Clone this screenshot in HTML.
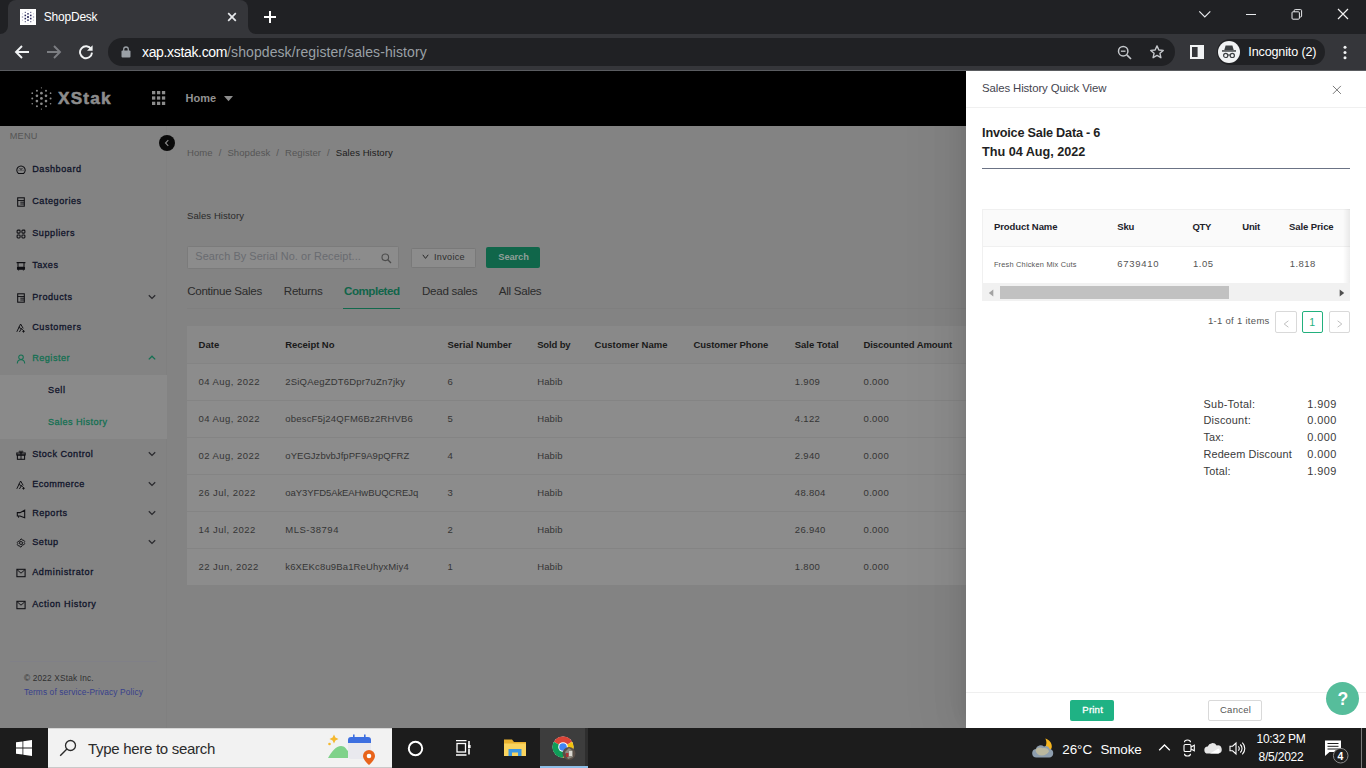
<!DOCTYPE html>
<html><head><meta charset="utf-8"><title>ShopDesk</title>
<style>
*{box-sizing:border-box;margin:0;padding:0}
html,body{width:1366px;height:768px;overflow:hidden;background:#838383;font-family:"Liberation Sans",sans-serif;}
.abs{position:absolute}
#root{position:relative;width:1366px;height:768px;overflow:hidden}
.t{white-space:nowrap}
/* chrome */
#tabstrip{left:0;top:0;width:1366px;height:34px;background:#202124}
#tab{left:8px;top:0;width:240px;height:34px;background:#35363a;border-radius:8px 8px 0 0}
#toolbar{left:0;top:34px;width:1366px;height:36px;background:#35363a}
#tbline{left:0;top:70px;width:1366px;height:1px;background:#5a5c60}
#omni{left:108px;top:38px;width:1067px;height:28px;border-radius:14px;background:#202124}
.ct{color:#fff;font-size:14px;white-space:nowrap}
/* app */
#apphead{left:0;top:71px;width:966px;height:55px;background:#000}
#page{left:0;top:126px;width:966px;height:602px;background:#838383}
#sidebar{left:0;top:126px;width:167px;height:602px;background:#838383;border-right:1px solid #808080}
.mi{position:absolute;left:32px;font-size:10px;font-weight:bold;color:#1d1d1f;white-space:nowrap;letter-spacing:.1px}
.mi.g{color:#176b51}
.ic{position:absolute;left:17px;width:10px;height:10px}
.chev{position:absolute;left:148px;width:8px;height:6px}
#submenu{left:0;top:375px;width:166.5px;height:64px;background:#8a8a8a}
/* main */
.bc{font-size:9.5px;color:#5f5f5f;white-space:nowrap}
.tabt{font-size:12px;color:#2c2c2c;white-space:nowrap}
#tbl{left:187px;top:326px;width:779px;height:259px;background:#8a8a8a}
#thead{left:187px;top:326px;width:779px;height:37px;background:#868686}
.th{position:absolute;font-size:9.5px;font-weight:bold;color:#1c1c1c;white-space:nowrap;top:339px}
.td{position:absolute;font-size:9.5px;color:#333;white-space:nowrap;letter-spacing:.3px}
.rl{position:absolute;left:187px;width:779px;height:1px;background:#818181}
/* drawer */
#drawer{left:966px;top:71px;width:400px;height:657px;background:#fff}
#shadow{left:950px;top:71px;width:16px;height:657px;background:linear-gradient(to right,rgba(0,0,0,0),rgba(0,0,0,.12))}
.dt{position:absolute;white-space:nowrap}

.dth{top:221px;font-size:9.5px;font-weight:bold;color:#262626;letter-spacing:.1px}
.dtd{top:258px;font-size:9.5px;color:#444;letter-spacing:.55px}
.pg{top:311px;width:21px;height:22px;border:1px solid #d9d9d9;border-radius:2px;background:#fff}
.tl{left:1203px;font-size:11px;color:#3c3c3c;letter-spacing:.05px}
.tv{right:29px;font-size:11px;color:#3c3c3c;letter-spacing:.3px}
/* taskbar */
.tk{color:#fff;white-space:nowrap}
#taskbar{left:0;top:728px;width:1366px;height:40px;background:#1c1c1c}
</style></head><body><div id="root">

<!-- ===== Browser chrome ===== -->
<div id="tabstrip" class="abs"></div>
<div id="tab" class="abs"></div>
<svg class="abs" style="left:0;top:26px" width="8" height="8" viewBox="0 0 8 8"><path d="M8 0v8H0A8 8 0 0 0 8 0z" fill="#35363a"/></svg>
<svg class="abs" style="left:248px;top:26px" width="8" height="8" viewBox="0 0 8 8"><path d="M0 0v8h8A8 8 0 0 1 0 0z" fill="#35363a"/></svg>
<svg class="abs" style="left:20px;top:9px" width="16" height="16" viewBox="0 0 16 16"><rect width="16" height="16" fill="#fff"/><g fill="#2a2a5c"><rect x="7.64" y="1.27" width="0.72" height="0.72" opacity="0.30"/><rect x="7.22" y="4.04" width="1.56" height="1.56" opacity="0.90"/><rect x="7.10" y="7.10" width="1.80" height="1.80" opacity="1.00"/><rect x="7.22" y="10.40" width="1.56" height="1.56" opacity="0.90"/><rect x="7.64" y="14.02" width="0.72" height="0.72" opacity="0.30"/><rect x="4.76" y="2.83" width="1.08" height="1.08" opacity="0.85"/><rect x="4.52" y="5.64" width="1.56" height="1.56" opacity="1.00"/><rect x="4.52" y="8.79" width="1.56" height="1.56" opacity="1.00"/><rect x="4.76" y="12.14" width="1.08" height="1.08" opacity="0.85"/><rect x="10.21" y="2.83" width="1.08" height="1.08" opacity="0.85"/><rect x="9.97" y="5.64" width="1.56" height="1.56" opacity="1.00"/><rect x="9.97" y="8.79" width="1.56" height="1.56" opacity="1.00"/><rect x="10.21" y="12.14" width="1.08" height="1.08" opacity="0.85"/><rect x="1.96" y="4.28" width="1.08" height="1.08" opacity="0.30"/><rect x="1.84" y="7.34" width="1.32" height="1.32" opacity="0.50"/><rect x="1.96" y="10.64" width="1.08" height="1.08" opacity="0.30"/><rect x="12.96" y="4.28" width="1.08" height="1.08" opacity="0.30"/><rect x="12.84" y="7.34" width="1.32" height="1.32" opacity="0.50"/><rect x="12.96" y="10.64" width="1.08" height="1.08" opacity="0.30"/></g></svg>
<div class="abs ct" style="left:43.8px;top:10px;font-size:12px;letter-spacing:-.22px">ShopDesk</div>
<svg class="abs" style="left:227px;top:12px" width="10" height="10" viewBox="0 0 10 10"><path d="M1.2 1.2l7.6 7.6M8.8 1.2L1.2 8.8" stroke="#e8eaed" stroke-width="1.7"/></svg>
<svg class="abs" style="left:263px;top:10px" width="14" height="14" viewBox="0 0 14 14"><path d="M7 1v12M1 7h12" stroke="#fff" stroke-width="2"/></svg>
<!-- window controls -->
<svg class="abs" style="left:1198px;top:9px" width="14" height="10" viewBox="0 0 14 10"><path d="M1.3 2.3L6.8 7.8l5.5-5.5" stroke="#e8eaed" stroke-width="1.2" fill="none"/></svg>
<div class="abs" style="left:1246px;top:14px;width:10px;height:1px;background:#e8eaed"></div>
<svg class="abs" style="left:1291px;top:9px" width="12" height="11" viewBox="0 0 12 11"><rect x="1" y="2.8" width="7.4" height="7.4" rx="1" stroke="#e8eaed" stroke-width="1" fill="none"/><path d="M3.2 2.8V1.6a1 1 0 0 1 1-1h5.4a1 1 0 0 1 1 1v5.4a1 1 0 0 1-1 1H8.6" stroke="#e8eaed" stroke-width="1" fill="none"/></svg>
<svg class="abs" style="left:1337px;top:8px" width="12" height="12" viewBox="0 0 12 12"><path d="M1 1l10 10M11 1L1 11" stroke="#f1f1f1" stroke-width="1.2"/></svg>

<div id="toolbar" class="abs"></div>
<div id="tbline" class="abs"></div>
<!-- nav icons -->
<svg class="abs" style="left:14px;top:44px" width="16" height="16" viewBox="0 0 16 16"><path d="M15 8H2.5M8 2L2 8l6 6" stroke="#f1f3f4" stroke-width="1.9" fill="none"/></svg>
<svg class="abs" style="left:46px;top:44px" width="16" height="16" viewBox="0 0 16 16"><path d="M1 8h12.5M8 2l6 6-6 6" stroke="#7c7e82" stroke-width="1.9" fill="none"/></svg>
<svg class="abs" style="left:78px;top:44px" width="16" height="16" viewBox="0 0 16 16"><path d="M13.2 5.2A6 6 0 1 0 14 8.6" stroke="#f1f3f4" stroke-width="1.9" fill="none"/><path d="M14.6 1.2v5.6H9z" fill="#f1f3f4"/></svg>
<div id="omni" class="abs"></div>
<svg class="abs" style="left:121px;top:46px" width="10" height="12" viewBox="0 0 10 12"><rect x="0.5" y="4.6" width="9" height="7" rx="1" fill="#9aa0a6"/><path d="M2.7 5V3.3a2.3 2.3 0 0 1 4.6 0V5" stroke="#9aa0a6" stroke-width="1.3" fill="none"/></svg>
<div class="abs ct" style="left:142px;top:43.5px;font-size:14px"><span style="color:#fff;letter-spacing:-.34px">xap.xstak.com</span><span style="color:#9aa0a6;letter-spacing:.09px">/shopdesk/register/sales-history</span></div>
<svg class="abs" style="left:1117px;top:45px" width="16" height="15" viewBox="0 0 16 15"><circle cx="6.2" cy="6.2" r="4.7" stroke="#c4c7cb" stroke-width="1.5" fill="none"/><path d="M9.8 9.8l4.2 4.2" stroke="#c4c7cb" stroke-width="1.7"/><path d="M3.9 6.2h4.6" stroke="#c4c7cb" stroke-width="1.3"/></svg>
<svg class="abs" style="left:1149px;top:44px" width="16" height="16" viewBox="0 0 16 16"><path d="M8 1.9l1.85 4.05 4.4.45-3.3 2.95.95 4.35L8 11.45 4.1 13.7l.95-4.35-3.3-2.95 4.4-.45z" stroke="#c4c7cb" stroke-width="1.4" fill="none" stroke-linejoin="round"/></svg>
<svg class="abs" style="left:1190px;top:45px" width="14" height="14" viewBox="0 0 14 14"><rect x="1" y="1" width="12" height="12" stroke="#f1f3f4" stroke-width="2" fill="none"/><rect x="7.6" y="1" width="5.4" height="12" fill="#f1f3f4"/></svg>
<div class="abs" style="left:1217px;top:39px;width:108px;height:26px;border-radius:13px;background:#202124"></div>
<div class="abs" style="left:1218px;top:41px;width:22px;height:22px;border-radius:11px;background:#f1f3f4"></div>
<svg class="abs" style="left:1221px;top:45px" width="16" height="14" viewBox="0 0 16 14"><path d="M4.6 0.6h6.8l1.3 4.3H3.3z" fill="#3c4043"/><rect x="1" y="5.2" width="14" height="1.5" fill="#3c4043"/><circle cx="4.7" cy="10.4" r="2.1" stroke="#3c4043" stroke-width="1.2" fill="none"/><circle cx="11.3" cy="10.4" r="2.1" stroke="#3c4043" stroke-width="1.2" fill="none"/><path d="M6.8 10h2.4" stroke="#3c4043" stroke-width="1.1"/></svg>
<div class="abs ct" style="left:1248.3px;top:45px;font-size:12.6px;letter-spacing:-.15px">Incognito (2)</div>
<svg class="abs" style="left:1342px;top:45px" width="6" height="15" viewBox="0 0 6 15" fill="#f1f3f4"><circle cx="3" cy="2.3" r="1.5"/><circle cx="3" cy="7.5" r="1.5"/><circle cx="3" cy="12.7" r="1.5"/></svg>

<!-- ===== App ===== -->
<div id="page" class="abs"></div>
<div id="sidebar" class="abs"></div>
<div id="apphead" class="abs"></div>
<div id="submenu" class="abs"></div>


<!-- app header content -->
<svg class="abs" style="left:26px;top:82px" width="32" height="32" viewBox="0 0 32 32" fill="#8c8c8c"><circle cx="15.42" cy="5.83" r="0.62"/><circle cx="15.42" cy="11.17" r="1.35"/><circle cx="15.42" cy="16.46" r="1.40"/><circle cx="15.42" cy="21.75" r="1.35"/><circle cx="15.42" cy="27.08" r="0.62"/><circle cx="10.92" cy="8.75" r="1.00"/><circle cx="10.92" cy="13.83" r="1.30"/><circle cx="10.92" cy="19.08" r="1.30"/><circle cx="10.92" cy="24.25" r="1.00"/><circle cx="20.00" cy="8.75" r="1.00"/><circle cx="20.00" cy="13.83" r="1.30"/><circle cx="20.00" cy="19.08" r="1.30"/><circle cx="20.00" cy="24.25" r="1.00"/><circle cx="6.25" cy="11.17" r="0.85"/><circle cx="6.25" cy="16.46" r="1.00"/><circle cx="6.25" cy="21.75" r="0.80"/><circle cx="24.58" cy="11.17" r="0.85"/><circle cx="24.58" cy="16.46" r="1.00"/><circle cx="24.58" cy="21.75" r="0.80"/></svg>
<div class="abs t " style="left:58.10px;top:90.04px;font-size:17.2px;line-height:17.2px;font-weight:bold;color:#8c8c8c;letter-spacing:1.15px;-webkit-text-stroke:.55px #8c8c8c">XStak</div>
<svg class="abs" style="left:151.8px;top:91px" width="14" height="15" viewBox="0 0 14 15" fill="#8c8c8c"><rect x="0.00" y="0.00" width="3.3" height="3.3"/><rect x="0.00" y="5.35" width="3.3" height="3.3"/><rect x="0.00" y="10.70" width="3.3" height="3.3"/><rect x="4.95" y="0.00" width="3.3" height="3.3"/><rect x="4.95" y="5.35" width="3.3" height="3.3"/><rect x="4.95" y="10.70" width="3.3" height="3.3"/><rect x="9.90" y="0.00" width="3.3" height="3.3"/><rect x="9.90" y="5.35" width="3.3" height="3.3"/><rect x="9.90" y="10.70" width="3.3" height="3.3"/></svg>
<div class="abs t " style="left:185.50px;top:92.79px;font-size:11px;line-height:11px;font-weight:bold;color:#929292;letter-spacing:.0px">Home</div>
<svg class="abs" style="left:224px;top:96px" width="9" height="6" viewBox="0 0 9 6"><path d="M0 0h9L4.500 5.300z" fill="#8c8c8c"/></svg>
<!-- sidebar content -->
<div class="abs t " style="left:9.70px;top:131.81px;font-size:9.2px;line-height:9.2px;color:#555;letter-spacing:.25px">MENU</div>
<div class="abs" style="left:158.7px;top:134.900px;width:16.500px;height:16.500px;border-radius:9px;background:#0a0a0a"></div>
<svg class="abs" style="left:163px;top:139px" width="8" height="8" viewBox="0 0 8 8"><path d="M5.300 1.200L2.500 4l2.800 2.800" stroke="#8c8c8c" stroke-width="1.100" fill="none"/></svg>
<div class="abs t " style="left:32.20px;top:165.20px;font-size:9.1px;line-height:9.1px;color:#10142a;letter-spacing:0.55px;-webkit-text-stroke:.3px #10142a">Dashboard</div>
<svg class="abs" style="left:15.500px;top:165.00px" width="10" height="10" viewBox="0 0 10 10" fill="none" stroke="#0e0e12" stroke-width="1.050"><path d="M2.450 8.500A4.200 4.200 0 1 1 7.550 8.500z"/><path d="M5 5.600V3.200" stroke-width="1"/><path d="M2.500 5.300h.9M6.600 5.300h.9M3.100 3.100l.6.600M6.900 3.100l-.6.600" stroke-width=".7"/></svg>
<div class="abs t " style="left:32.20px;top:197.20px;font-size:9.1px;line-height:9.1px;color:#10142a;letter-spacing:0.55px;-webkit-text-stroke:.3px #10142a">Categories</div>
<svg class="abs" style="left:15.500px;top:197.00px" width="10" height="10" viewBox="0 0 10 10" fill="none" stroke="#0e0e12" stroke-width="1.050"><rect x="1.700" y="0.800" width="6.600" height="8.400"/><path d="M1.700 3.500h6.600M4.300 5.200h4M4.300 7h4" stroke-width=".9"/></svg>
<div class="abs t " style="left:32.20px;top:229.20px;font-size:9.1px;line-height:9.1px;color:#10142a;letter-spacing:0.55px;-webkit-text-stroke:.3px #10142a">Suppliers</div>
<svg class="abs" style="left:15.500px;top:229.00px" width="10" height="10" viewBox="0 0 10 10" fill="none" stroke="#0e0e12" stroke-width="1.050"><rect x="1.100" y="1.100" width="3" height="3" rx=".8"/><rect x="5.900" y="1.100" width="3" height="3" rx=".8"/><rect x="1.100" y="5.900" width="3" height="3" rx=".8"/><rect x="5.900" y="5.900" width="3" height="3" rx=".8"/></svg>
<div class="abs t " style="left:32.20px;top:261.20px;font-size:9.1px;line-height:9.1px;color:#10142a;letter-spacing:0.5px;-webkit-text-stroke:.3px #10142a">Taxes</div>
<svg class="abs" style="left:15.500px;top:261.00px" width="10" height="10" viewBox="0 0 10 10" fill="none" stroke="#0e0e12" stroke-width="1.050"><path d="M0.600 1.600h8.800M2 1.600v4.600h6V1.600"/><path d="M1.500 6.500h7v1.600h-7z" fill="#0e0e12"/><path d="M2.600 8.300v1.200M7.400 8.300v1.200" stroke-width=".9"/></svg>
<div class="abs t " style="left:32.20px;top:293.20px;font-size:9.1px;line-height:9.1px;color:#10142a;letter-spacing:0.55px;-webkit-text-stroke:.3px #10142a">Products</div>
<svg class="abs" style="left:15.500px;top:293.00px" width="10" height="10" viewBox="0 0 10 10" fill="none" stroke="#0e0e12" stroke-width="1.050"><rect x="1.700" y="0.800" width="6.600" height="8.400"/><path d="M1.700 3.500h6.600M4.300 5.200h4M4.300 7h4" stroke-width=".9"/></svg>
<svg class="abs" style="left:147.800px;top:294.10px" width="8" height="6" viewBox="0 0 8 6"><path d="M.8 1.200L4 4.400l3.200-3.200" stroke="#2a2a2e" stroke-width="1.250" fill="none"/></svg>
<div class="abs t " style="left:32.20px;top:323.20px;font-size:9.1px;line-height:9.1px;color:#10142a;letter-spacing:0.6px;-webkit-text-stroke:.3px #10142a">Customers</div>
<svg class="abs" style="left:15.500px;top:323.00px" width="10" height="10" viewBox="0 0 10 10" fill="none" stroke="#0e0e12" stroke-width="1.050"><path d="M0.800 8.800L4.600 1l2.600 4.400M2.600 4.200l4.200 2.400M3.400 9l2.200-3.600" stroke-width=".95"/><path d="M7.500 7v2.600M6.200 8.300h2.600" stroke-width=".9"/></svg>
<div class="abs t " style="left:32.20px;top:354.20px;font-size:9.1px;line-height:9.1px;color:#147052;letter-spacing:0.5px;-webkit-text-stroke:.3px #147052">Register</div>
<svg class="abs" style="left:15.500px;top:354.00px" width="10" height="10" viewBox="0 0 10 10" fill="none" stroke="#147052" stroke-width="1.050"><circle cx="5" cy="3.200" r="2.300"/><path d="M1.300 9.600c0-2.600 1.500-3.900 3.700-3.900s3.700 1.300 3.700 3.900"/></svg>
<svg class="abs" style="left:147.800px;top:355.10px" width="8" height="6" viewBox="0 0 8 6"><path d="M.8 4.400L4 1.200l3.200 3.200" stroke="#147052" stroke-width="1.250" fill="none"/></svg>
<div class="abs t " style="left:32.20px;top:450.20px;font-size:9.1px;line-height:9.1px;color:#10142a;letter-spacing:0.5px;-webkit-text-stroke:.3px #10142a">Stock Control</div>
<svg class="abs" style="left:15.500px;top:450.00px" width="10" height="10" viewBox="0 0 10 10" fill="none" stroke="#0e0e12" stroke-width="1.050"><rect x="1.400" y="5" width="7.200" height="4.300"/><rect x="0.800" y="3" width="8.400" height="2"/><path d="M5 3v6.300M5 3C3.800 3 2.600 1.600 3.600 1s1.400 1 1.400 2zM5 3c1.200 0 2.400-1.400 1.400-2S5 2 5 3z" stroke-width=".9"/></svg>
<svg class="abs" style="left:147.800px;top:451.10px" width="8" height="6" viewBox="0 0 8 6"><path d="M.8 1.200L4 4.400l3.200-3.200" stroke="#2a2a2e" stroke-width="1.250" fill="none"/></svg>
<div class="abs t " style="left:32.20px;top:480.20px;font-size:9.1px;line-height:9.1px;color:#10142a;letter-spacing:0.45px;-webkit-text-stroke:.3px #10142a">Ecommerce</div>
<svg class="abs" style="left:15.500px;top:480.00px" width="10" height="10" viewBox="0 0 10 10" fill="none" stroke="#0e0e12" stroke-width="1.050"><path d="M0.800 8.800L4.600 1l2.600 4.400M2.600 4.200l4.200 2.400M3.400 9l2.200-3.600" stroke-width=".95"/><path d="M7.500 7v2.600M6.200 8.300h2.600" stroke-width=".9"/></svg>
<svg class="abs" style="left:147.800px;top:481.10px" width="8" height="6" viewBox="0 0 8 6"><path d="M.8 1.200L4 4.400l3.200-3.200" stroke="#2a2a2e" stroke-width="1.250" fill="none"/></svg>
<div class="abs t " style="left:32.20px;top:509.20px;font-size:9.1px;line-height:9.1px;color:#10142a;letter-spacing:0.5px;-webkit-text-stroke:.3px #10142a">Reports</div>
<svg class="abs" style="left:15.500px;top:509.00px" width="10" height="10" viewBox="0 0 10 10" fill="none" stroke="#0e0e12" stroke-width="1.050"><path d="M8.700 1.200v7.600L4 7H1.300V3.600H4z"/><path d="M2.600 7v1.800" stroke-width=".9"/></svg>
<svg class="abs" style="left:147.800px;top:510.10px" width="8" height="6" viewBox="0 0 8 6"><path d="M.8 1.200L4 4.400l3.200-3.200" stroke="#2a2a2e" stroke-width="1.250" fill="none"/></svg>
<div class="abs t " style="left:32.20px;top:538.20px;font-size:9.1px;line-height:9.1px;color:#10142a;letter-spacing:0.55px;-webkit-text-stroke:.3px #10142a">Setup</div>
<svg class="abs" style="left:15.500px;top:538.00px" width="10" height="10" viewBox="0 0 10 10" fill="none" stroke="#0e0e12" stroke-width="1.050"><circle cx="5" cy="5" r="1.500" stroke-width=".9"/><path d="M5 .9l1.150.5.500 1 1.200-.1.850 1.200-.55 1.050.55 1.050-.85 1.200-1.200-.1-.5 1L5 9.100l-1.150-.4-.5-1-1.200.1-.85-1.200.55-1.050L1.300 4.500l.850-1.200 1.200.1.500-1z" stroke-width=".9"/></svg>
<svg class="abs" style="left:147.800px;top:539.10px" width="8" height="6" viewBox="0 0 8 6"><path d="M.8 1.200L4 4.400l3.200-3.200" stroke="#2a2a2e" stroke-width="1.250" fill="none"/></svg>
<div class="abs t " style="left:32.20px;top:568.20px;font-size:9.1px;line-height:9.1px;color:#10142a;letter-spacing:0.62px;-webkit-text-stroke:.3px #10142a">Administrator</div>
<svg class="abs" style="left:15.500px;top:568.00px" width="10" height="10" viewBox="0 0 10 10" fill="none" stroke="#0e0e12" stroke-width="1.050"><rect x="0.900" y="1.300" width="8.200" height="7.400"/><path d="M1.200 1.800L5 5.200l3.800-3.400" stroke-width=".95"/></svg>
<div class="abs t " style="left:32.20px;top:600.00px;font-size:9.1px;line-height:9.1px;color:#10142a;letter-spacing:0.58px;-webkit-text-stroke:.3px #10142a">Action History</div>
<svg class="abs" style="left:15.500px;top:599.80px" width="10" height="10" viewBox="0 0 10 10" fill="none" stroke="#0e0e12" stroke-width="1.050"><rect x="0.900" y="1.300" width="8.200" height="7.400"/><path d="M1.200 1.800L5 5.200l3.800-3.400" stroke-width=".95"/></svg>
<div class="abs t " style="left:48.10px;top:386.20px;font-size:9.1px;line-height:9.1px;color:#10142a;letter-spacing:.55px;-webkit-text-stroke:.3px #10142a">Sell</div>
<div class="abs t " style="left:48.10px;top:418.20px;font-size:9.1px;line-height:9.1px;color:#147052;letter-spacing:.44px;-webkit-text-stroke:.3px #147052">Sales History</div>
<div class="abs" style="left:10px;top:660.500px;width:147px;height:1px;background:#808087"></div>
<div class="abs t " style="left:23.90px;top:673.97px;font-size:8.3px;line-height:8.3px;color:#303030;letter-spacing:.17px">© 2022 XStak Inc.</div>
<div class="abs t " style="left:23.90px;top:687.97px;font-size:8.3px;line-height:8.3px;color:#37408c;letter-spacing:.14px">Terms of service-Privacy Policy</div>
<!-- main content -->
<div class="abs t " style="left:187.00px;top:148.16px;font-size:9.5px;line-height:9.5px;color:#555;letter-spacing:.08px"><span>Home</span><span style="margin:0 6px">/</span><span>Shopdesk</span><span style="margin:0 6px">/</span><span>Register</span><span style="margin:0 6px">/</span><span style="color:#1c1c1c">Sales History</span></div>
<div class="abs t " style="left:187.00px;top:210.96px;font-size:9.5px;line-height:9.5px;color:#2a2a2a;letter-spacing:.08px">Sales History</div>
<div class="abs" style="left:187px;top:246px;width:212.300px;height:23.300px;background:#8c8c8c;border:1px solid #7b7b7b;border-radius:1.500px"></div>
<div class="abs t " style="left:195.30px;top:250.77px;font-size:10.9px;line-height:10.9px;color:#696b70;letter-spacing:.08px">Search By Serial No. or Receipt...</div>
<svg class="abs" style="left:381px;top:252.500px" width="11" height="11" viewBox="0 0 11 11"><circle cx="4.300" cy="4.300" r="3.300" stroke="#4c4c4c" stroke-width="1.100" fill="none"/><path d="M6.800 6.800L10 10" stroke="#4c4c4c" stroke-width="1.300"/></svg>
<div class="abs" style="left:410.500px;top:247.500px;width:65px;height:20px;background:#8c8c8c;border:1px solid #797979;border-radius:1.500px"></div>
<svg class="abs" style="left:421.500px;top:253.500px" width="7" height="6" viewBox="0 0 7 6"><path d="M0.800 .8l2.700 3.600L6.200.8" stroke="#2a2a2a" stroke-width="1" fill="none"/></svg>
<div class="abs t " style="left:434.00px;top:252.60px;font-size:9.1px;line-height:9.1px;color:#2e2e2e;letter-spacing:.3px">Invoice</div>
<div class="abs" style="left:486px;top:247px;width:54px;height:21px;background:#10664a;border-radius:2px"></div>
<div class="abs t " style="left:498.30px;top:253.03px;font-size:9.3px;line-height:9.3px;color:#8f9f99;letter-spacing:-.1px;font-weight:bold">Search</div>
<div class="abs t " style="left:187.20px;top:285.38px;font-size:11.6px;line-height:11.6px;color:#2b2b2b;letter-spacing:-.28px">Continue Sales</div>
<div class="abs t " style="left:283.80px;top:285.38px;font-size:11.6px;line-height:11.6px;color:#2b2b2b;letter-spacing:-.28px">Returns</div>
<div class="abs t " style="left:344.10px;top:285.38px;font-size:11.6px;line-height:11.6px;color:#11654a;font-weight:bold;letter-spacing:-.5px">Completed</div>
<div class="abs t " style="left:422.00px;top:285.38px;font-size:11.6px;line-height:11.6px;color:#2b2b2b;letter-spacing:-.28px">Dead sales</div>
<div class="abs t " style="left:498.80px;top:285.38px;font-size:11.6px;line-height:11.6px;color:#2b2b2b;letter-spacing:-.28px">All Sales</div>
<div class="abs" style="left:187px;top:308.200px;width:779px;height:1px;background:#7f7f7f"></div>
<div class="abs" style="left:343.300px;top:307.800px;width:56.500px;height:1.600px;background:#12694d"></div>
<div class="abs" style="left:187px;top:326px;width:779px;height:259px;background:#8c8c8c"></div>
<div class="abs" style="left:187px;top:326px;width:779px;height:37px;background:#898989"></div>
<div class="abs t " style="left:198.50px;top:339.96px;font-size:9.5px;line-height:9.5px;font-weight:bold;color:#1a1a1a;letter-spacing:0.05px">Date</div>
<div class="abs t " style="left:285.30px;top:339.96px;font-size:9.5px;line-height:9.5px;font-weight:bold;color:#1a1a1a;letter-spacing:-0.05px">Receipt No</div>
<div class="abs t " style="left:447.50px;top:339.96px;font-size:9.5px;line-height:9.5px;font-weight:bold;color:#1a1a1a;letter-spacing:-0.02px">Serial Number</div>
<div class="abs t " style="left:537.20px;top:339.96px;font-size:9.5px;line-height:9.5px;font-weight:bold;color:#1a1a1a;letter-spacing:-0.15px">Sold by</div>
<div class="abs t " style="left:594.60px;top:339.96px;font-size:9.5px;line-height:9.5px;font-weight:bold;color:#1a1a1a;letter-spacing:0.0px">Customer Name</div>
<div class="abs t " style="left:693.50px;top:339.96px;font-size:9.5px;line-height:9.5px;font-weight:bold;color:#1a1a1a;letter-spacing:-0.1px">Customer Phone</div>
<div class="abs t " style="left:794.80px;top:339.96px;font-size:9.5px;line-height:9.5px;font-weight:bold;color:#1a1a1a;letter-spacing:-0.05px">Sale Total</div>
<div class="abs t " style="left:863.50px;top:339.96px;font-size:9.5px;line-height:9.5px;font-weight:bold;color:#1a1a1a;letter-spacing:-0.08px">Discounted Amount</div>
<div class="abs" style="left:187px;top:363.00px;width:779px;height:1px;background:#848484"></div>
<div class="abs t " style="left:198.50px;top:376.66px;font-size:9.5px;line-height:9.5px;color:#353535;letter-spacing:0.45px">04 Aug, 2022</div>
<div class="abs t " style="left:285.30px;top:376.66px;font-size:9.5px;line-height:9.5px;color:#353535;letter-spacing:0.19px">2SiQAegZDT6Dpr7uZn7jky</div>
<div class="abs t " style="left:447.50px;top:376.66px;font-size:9.5px;line-height:9.5px;color:#353535;letter-spacing:0.3px">6</div>
<div class="abs t " style="left:537.20px;top:376.66px;font-size:9.5px;line-height:9.5px;color:#353535;letter-spacing:0.1px">Habib</div>
<div class="abs t " style="left:794.80px;top:376.66px;font-size:9.5px;line-height:9.5px;color:#353535;letter-spacing:0.3px">1.909</div>
<div class="abs t " style="left:863.50px;top:376.66px;font-size:9.5px;line-height:9.5px;color:#353535;letter-spacing:0.35px">0.000</div>
<div class="abs" style="left:187px;top:400.00px;width:779px;height:1px;background:#848484"></div>
<div class="abs t " style="left:198.50px;top:413.66px;font-size:9.5px;line-height:9.5px;color:#353535;letter-spacing:0.45px">04 Aug, 2022</div>
<div class="abs t " style="left:285.30px;top:413.66px;font-size:9.5px;line-height:9.5px;color:#353535;letter-spacing:0.19px">obescF5j24QFM6Bz2RHVB6</div>
<div class="abs t " style="left:447.50px;top:413.66px;font-size:9.5px;line-height:9.5px;color:#353535;letter-spacing:0.3px">5</div>
<div class="abs t " style="left:537.20px;top:413.66px;font-size:9.5px;line-height:9.5px;color:#353535;letter-spacing:0.1px">Habib</div>
<div class="abs t " style="left:794.80px;top:413.66px;font-size:9.5px;line-height:9.5px;color:#353535;letter-spacing:0.3px">4.122</div>
<div class="abs t " style="left:863.50px;top:413.66px;font-size:9.5px;line-height:9.5px;color:#353535;letter-spacing:0.35px">0.000</div>
<div class="abs" style="left:187px;top:437.00px;width:779px;height:1px;background:#848484"></div>
<div class="abs t " style="left:198.50px;top:450.66px;font-size:9.5px;line-height:9.5px;color:#353535;letter-spacing:0.45px">02 Aug, 2022</div>
<div class="abs t " style="left:285.30px;top:450.66px;font-size:9.5px;line-height:9.5px;color:#353535;letter-spacing:0.045px">oYEGJzbvbJfpPF9A9pQFRZ</div>
<div class="abs t " style="left:447.50px;top:450.66px;font-size:9.5px;line-height:9.5px;color:#353535;letter-spacing:0.3px">4</div>
<div class="abs t " style="left:537.20px;top:450.66px;font-size:9.5px;line-height:9.5px;color:#353535;letter-spacing:0.1px">Habib</div>
<div class="abs t " style="left:794.80px;top:450.66px;font-size:9.5px;line-height:9.5px;color:#353535;letter-spacing:0.3px">2.940</div>
<div class="abs t " style="left:863.50px;top:450.66px;font-size:9.5px;line-height:9.5px;color:#353535;letter-spacing:0.35px">0.000</div>
<div class="abs" style="left:187px;top:474.00px;width:779px;height:1px;background:#848484"></div>
<div class="abs t " style="left:198.50px;top:487.66px;font-size:9.5px;line-height:9.5px;color:#353535;letter-spacing:0.45px">26 Jul, 2022</div>
<div class="abs t " style="left:285.30px;top:487.66px;font-size:9.5px;line-height:9.5px;color:#353535;letter-spacing:-0.08px">oaY3YFD5AkEAHwBUQCREJq</div>
<div class="abs t " style="left:447.50px;top:487.66px;font-size:9.5px;line-height:9.5px;color:#353535;letter-spacing:0.3px">3</div>
<div class="abs t " style="left:537.20px;top:487.66px;font-size:9.5px;line-height:9.5px;color:#353535;letter-spacing:0.1px">Habib</div>
<div class="abs t " style="left:794.80px;top:487.66px;font-size:9.5px;line-height:9.5px;color:#353535;letter-spacing:0.3px">48.804</div>
<div class="abs t " style="left:863.50px;top:487.66px;font-size:9.5px;line-height:9.5px;color:#353535;letter-spacing:0.35px">0.000</div>
<div class="abs" style="left:187px;top:511.00px;width:779px;height:1px;background:#848484"></div>
<div class="abs t " style="left:198.50px;top:524.66px;font-size:9.5px;line-height:9.5px;color:#353535;letter-spacing:0.45px">14 Jul, 2022</div>
<div class="abs t " style="left:285.30px;top:524.66px;font-size:9.5px;line-height:9.5px;color:#353535;letter-spacing:0.5px">MLS-38794</div>
<div class="abs t " style="left:447.50px;top:524.66px;font-size:9.5px;line-height:9.5px;color:#353535;letter-spacing:0.3px">2</div>
<div class="abs t " style="left:537.20px;top:524.66px;font-size:9.5px;line-height:9.5px;color:#353535;letter-spacing:0.1px">Habib</div>
<div class="abs t " style="left:794.80px;top:524.66px;font-size:9.5px;line-height:9.5px;color:#353535;letter-spacing:0.3px">26.940</div>
<div class="abs t " style="left:863.50px;top:524.66px;font-size:9.5px;line-height:9.5px;color:#353535;letter-spacing:0.35px">0.000</div>
<div class="abs" style="left:187px;top:548.00px;width:779px;height:1px;background:#848484"></div>
<div class="abs t " style="left:198.50px;top:561.66px;font-size:9.5px;line-height:9.5px;color:#353535;letter-spacing:0.45px">22 Jun, 2022</div>
<div class="abs t " style="left:285.30px;top:561.66px;font-size:9.5px;line-height:9.5px;color:#353535;letter-spacing:0.145px">k6XEKc8u9Ba1ReUhyxMiy4</div>
<div class="abs t " style="left:447.50px;top:561.66px;font-size:9.5px;line-height:9.5px;color:#353535;letter-spacing:0.3px">1</div>
<div class="abs t " style="left:537.20px;top:561.66px;font-size:9.5px;line-height:9.5px;color:#353535;letter-spacing:0.1px">Habib</div>
<div class="abs t " style="left:794.80px;top:561.66px;font-size:9.5px;line-height:9.5px;color:#353535;letter-spacing:0.3px">1.800</div>
<div class="abs t " style="left:863.50px;top:561.66px;font-size:9.5px;line-height:9.5px;color:#353535;letter-spacing:0.35px">0.000</div>
<!-- drawer -->
<div class="abs" style="left:0;top:71px;width:1366px;height:657px;overflow:hidden"><div class="abs" style="left:966px;top:0;width:400px;height:657px;box-shadow:-6px 0 16px -8px rgba(0,0,0,.10),-9px 0 28px 0 rgba(0,0,0,.06),-12px 0 48px 16px rgba(0,0,0,.035)"></div></div>
<div id="drawer" class="abs"></div>
<div class="abs t " style="left:982.10px;top:83.25px;font-size:11.4px;line-height:11.4px;color:#44444e;letter-spacing:-.12px">Sales History Quick View</div>
<svg class="abs" style="left:1332px;top:84.500px" width="10" height="10" viewBox="0 0 10 10"><path d="M0.900 0.900l8 8M8.900 0.900L0.900 8.900" stroke="#7a7a7a" stroke-width="1"/></svg>
<div class="abs" style="left:966px;top:107px;width:400px;height:1px;background:#f0f0f0"></div>
<div class="abs t " style="left:982.10px;top:127.25px;font-size:12.7px;line-height:12.7px;font-weight:bold;color:#1f1f23;letter-spacing:-.22px">Invoice Sale Data - 6</div>
<div class="abs t " style="left:982.10px;top:146.25px;font-size:12.7px;line-height:12.7px;font-weight:bold;color:#1f1f23;letter-spacing:-.05px">Thu 04 Aug, 2022</div>
<div class="abs" style="left:982px;top:167.600px;width:368px;height:1.200px;background:#6b7385"></div>
<div class="abs" style="left:982px;top:209px;width:368px;height:37.500px;background:#fafafa;border-top:1px solid #f0f0f0;border-bottom:1px solid #f0f0f0"></div>
<div class="abs" style="left:982px;top:209px;width:1px;height:74px;background:#f0f0f0"></div>
<div class="abs" style="left:1343px;top:209px;width:7px;height:74px;background:linear-gradient(to right,rgba(0,0,0,0),rgba(0,0,0,.07))"></div>
<div class="abs t " style="left:993.90px;top:222.06px;font-size:9.5px;line-height:9.5px;font-weight:bold;color:#22222a;letter-spacing:-0.07px">Product Name</div>
<div class="abs t " style="left:1117.30px;top:222.06px;font-size:9.5px;line-height:9.5px;font-weight:bold;color:#22222a;letter-spacing:-0.2px">Sku</div>
<div class="abs t " style="left:1192.40px;top:222.06px;font-size:9.5px;line-height:9.5px;font-weight:bold;color:#22222a;letter-spacing:-0.3px">QTY</div>
<div class="abs t " style="left:1242.20px;top:222.06px;font-size:9.5px;line-height:9.5px;font-weight:bold;color:#22222a;letter-spacing:-0.15px">Unit</div>
<div class="abs t " style="left:1289.10px;top:222.06px;font-size:9.5px;line-height:9.5px;font-weight:bold;color:#22222a;letter-spacing:-0.1px">Sale Price</div>
<div class="abs t " style="left:993.90px;top:260.64px;font-size:7.4px;line-height:7.4px;color:#555;letter-spacing:.2px">Fresh Chicken Mix Cuts</div>
<div class="abs t " style="left:1117.30px;top:259.06px;font-size:9.5px;line-height:9.5px;color:#555;letter-spacing:0.7px">6739410</div>
<div class="abs t " style="left:1193.00px;top:259.06px;font-size:9.5px;line-height:9.5px;color:#555;letter-spacing:0.5px">1.05</div>
<div class="abs t " style="left:1289.80px;top:259.06px;font-size:9.5px;line-height:9.5px;color:#555;letter-spacing:0.4px">1.818</div>
<div class="abs" style="left:982px;top:283px;width:368px;height:17.500px;background:#f1f1f1"></div>
<div class="abs" style="left:1000px;top:286px;width:229px;height:12.800px;background:#c1c1c1"></div>
<svg class="abs" style="left:988px;top:288.500px" width="6" height="8" viewBox="0 0 6 8"><path d="M5.300 0.500v7L0.800 4z" fill="#a3a3a3"/></svg>
<svg class="abs" style="left:1339px;top:288.500px" width="6" height="8" viewBox="0 0 6 8"><path d="M0.700 0.500v7l4.500-3.500z" fill="#505050"/></svg>
<div class="abs t " style="left:1207.90px;top:315.96px;font-size:9.5px;line-height:9.5px;color:#555;letter-spacing:.3px">1-1 of 1 items</div>
<div class="abs pg" style="left:1275px;width:22px"></div>
<div class="abs pg" style="left:1302px;width:21px;border-color:#22b07d"></div>
<div class="abs pg" style="left:1329px;width:21px"></div>
<svg class="abs" style="left:1282.500px;top:320px" width="7" height="8" viewBox="0 0 7 8"><path d="M5.400 .8L1.200 4l4.200 3.200" stroke="#bfbfbf" stroke-width="1" fill="none"/></svg>
<svg class="abs" style="left:1336px;top:320px" width="7" height="8" viewBox="0 0 7 8"><path d="M1.600 .8L5.800 4 1.600 7.200" stroke="#bfbfbf" stroke-width="1" fill="none"/></svg>
<div class="abs t " style="left:1309.30px;top:317.31px;font-size:10.5px;line-height:10.5px;color:#22b07d">1</div>
<div class="abs t " style="left:1203.50px;top:398.97px;font-size:10.9px;line-height:10.9px;color:#3a3a3a;letter-spacing:0.28px">Sub-Total:</div>
<div class="abs t" style="right:29.10px;top:398.97px;font-size:10.9px;line-height:10.9px;color:#3a3a3a;letter-spacing:.5px">1.909</div>
<div class="abs t " style="left:1203.50px;top:414.87px;font-size:10.9px;line-height:10.9px;color:#3a3a3a;letter-spacing:0.22px">Discount:</div>
<div class="abs t" style="right:29.10px;top:414.87px;font-size:10.9px;line-height:10.9px;color:#3a3a3a;letter-spacing:.5px">0.000</div>
<div class="abs t " style="left:1203.50px;top:432.07px;font-size:10.9px;line-height:10.9px;color:#3a3a3a;letter-spacing:0.1px">Tax:</div>
<div class="abs t" style="right:29.10px;top:432.07px;font-size:10.9px;line-height:10.9px;color:#3a3a3a;letter-spacing:.5px">0.000</div>
<div class="abs t " style="left:1203.50px;top:448.87px;font-size:10.9px;line-height:10.9px;color:#3a3a3a;letter-spacing:0.12px">Redeem Discount</div>
<div class="abs t" style="right:29.10px;top:448.87px;font-size:10.9px;line-height:10.9px;color:#3a3a3a;letter-spacing:.5px">0.000</div>
<div class="abs t " style="left:1203.50px;top:465.87px;font-size:10.9px;line-height:10.9px;color:#3a3a3a;letter-spacing:0.2px">Total:</div>
<div class="abs t" style="right:29.10px;top:465.87px;font-size:10.9px;line-height:10.9px;color:#3a3a3a;letter-spacing:.5px">1.909</div>
<div class="abs" style="left:966px;top:691.500px;width:400px;height:1px;background:#efefef"></div>
<div class="abs" style="left:1070px;top:700px;width:44px;height:21px;background:#1fb284;border-radius:2px"></div>
<div class="abs t " style="left:1082.30px;top:704.97px;font-size:9.6px;line-height:9.6px;color:#fff;letter-spacing:.2px;-webkit-text-stroke:.3px #fff">Print</div>
<div class="abs" style="left:1208px;top:700px;width:53.500px;height:20.800px;background:#fff;border:1px solid #d9d9d9;border-radius:2px"></div>
<div class="abs t " style="left:1220.00px;top:705.06px;font-size:9.5px;line-height:9.5px;color:#555;letter-spacing:.25px">Cancel</div>
<div class="abs" style="left:1325.700px;top:681.800px;width:33.500px;height:33.500px;border-radius:17px;background:#56bd9b"></div>
<div class="abs t " style="left:1337.50px;top:691.00px;font-size:17.6px;line-height:17.6px;color:#fff;font-weight:bold">?</div>
<!-- ===== Taskbar ===== -->
<div id="taskbar" class="abs"></div>
<!-- start -->
<svg class="abs" style="left:16px;top:740px" width="16" height="16" viewBox="0 0 16 16" fill="#fff"><path d="M0 2.3l6.5-.9v6.2H0zM7.3 1.3L16 0v7.6H7.3zM0 8.4h6.5v6.2L0 13.7zM7.3 8.4H16V16l-8.7-1.3z"/></svg>
<div class="abs" style="left:48px;top:728px;width:344px;height:40px;background:#f2f2f2;border-top:1px solid #d6d6d6;border-bottom:1px solid #c9c9c9"></div>
<svg class="abs" style="left:59px;top:739px" width="18" height="18" viewBox="0 0 18 18"><circle cx="11.500" cy="6.500" r="5" stroke="#2b2b2b" stroke-width="1.3" fill="none"/><path d="M7.900 10.100L1.200 16.800" stroke="#2b2b2b" stroke-width="1.400"/></svg>
<div class="abs" style="left:88px;top:740px;font-size:15px;line-height:17px;color:#2b2b2b;white-space:nowrap;letter-spacing:-.29px">Type here to search</div>
<!-- search highlight art -->
<svg class="abs" style="left:326px;top:732px" width="52" height="34" viewBox="0 0 52 34">
<path d="M2 26c4-7 8-12 13-12 4 0 5 3 7 5v7z" fill="#7fd28a"/>
<path d="M8 2.5l1.4 3.1 3.1 1.4-3.1 1.4L8 11.500 6.600 8.400 3.500 7l3.100-1.400z" fill="#f5b82e"/><circle cx="3.500" cy="12" r="1.3" fill="#f5b82e"/>
<rect x="22" y="5" width="23" height="22" rx="3" fill="#e9e9ee"/><path d="M22 8a3 3 0 0 1 3-3h17a3 3 0 0 1 3 3v3H22z" fill="#3d6fe0"/>
<rect x="27" y="2.500" width="1.600" height="5" fill="#3d6fe0"/><rect x="38" y="2.500" width="1.600" height="5" fill="#3d6fe0"/>
<path d="M43 18a6 6 0 0 1 6 6c0 4-6 9-6 9s-6-5-6-9a6 6 0 0 1 6-6z" fill="#e8641b"/><circle cx="43" cy="24" r="2.300" fill="#fff"/>
</svg>
<!-- cortana -->
<svg class="abs" style="left:407px;top:740px" width="17" height="17" viewBox="0 0 17 17"><circle cx="8.500" cy="8.500" r="6.700" stroke="#fff" stroke-width="2" fill="none"/></svg>
<!-- task view -->
<svg class="abs" style="left:455px;top:739px" width="18" height="18" viewBox="0 0 18 18" fill="none" stroke="#fff" stroke-width="1.300"><rect x="2" y="4.500" width="8.500" height="8.500"/><path d="M1 1.700h10.500M1 16h10.500"/><path d="M14 2v5M14 9.500v6" stroke-width="1.600"/><rect x="13" y="6" width="2.600" height="3" fill="#fff" stroke="none"/></svg>
<!-- file explorer -->
<svg class="abs" style="left:503px;top:738px" width="24" height="20" viewBox="0 0 24 20"><path d="M1 1.500h8l2 2.500h12v14H1z" fill="#e9b12f"/><path d="M1 5.500h22v12.500H1z" fill="#fad45e"/><path d="M5.500 11h13v7h-13z" fill="#3b97e3"/><path d="M9 14.500h6v3.500H9z" fill="#fad45e"/></svg>
<!-- chrome -->
<div class="abs" style="left:540px;top:728px;width:45px;height:40px;background:#3d3d3d"></div>
<div class="abs" style="left:585px;top:728px;width:3px;height:40px;background:#2e2e2e"></div>
<div class="abs" style="left:540px;top:766px;width:48px;height:2px;background:#8ebfe8"></div>
<svg class="abs" style="left:552px;top:736px" width="24" height="25" viewBox="0 0 24 25">
<circle cx="11" cy="11" r="10.500" fill="#fff"/>
<path d="M11 11L1.900 5.750A10.500 10.500 0 0 1 20.100 5.750z" fill="#db4437"/>
<path d="M11 11L20.100 5.750A10.500 10.500 0 0 1 11 21.500z" fill="#f4c20d"/>
<path d="M11 11L11 21.500A10.500 10.500 0 0 1 1.900 5.750z" fill="#0f9d58"/>
<circle cx="11" cy="11" r="4.800" fill="#fff"/><circle cx="11" cy="11" r="3.800" fill="#4285f4"/>
<circle cx="17" cy="17.500" r="6.500" fill="#5a4f48"/><path d="M13 16l4-4 4 3v6l-5 2z" fill="#8d8a80"/><rect x="17" y="15" width="3" height="5" fill="#d9d6d0"/><rect x="14" y="17" width="2.500" height="4" fill="#a33"/>
</svg>
<!-- tray -->
<svg class="abs" style="left:1031px;top:737px" width="24" height="22" viewBox="0 0 24 22">
<path d="M14.300 1.600c3.800 1 6.500 4.300 6.500 7.600 0 1.600-.5 2.800-1.300 3.800l-6.300-1.800c2.300-2.200 3-6 1.100-9.600z" fill="#f6b51e"/>
<path d="M5.300 20.600a4.400 4.400 0 0 1-.6-8.700 5.200 5.200 0 0 1 8.300-2.400 4.600 4.600 0 0 1 5.800 2.600 4.300 4.300 0 0 1-.6 8.500z" fill="#8e9eae"/>
<path d="M4.500 13.500c1-2.800 4.800-3.800 7.200-2.200 2.800-.8 5.600.4 6.300 3 -1 2.700-4 4.200-7.200 4.200s-5.600-2-6.300-5z" fill="#c9c09a" opacity=".75"/>
</svg>
<div class="abs tk" style="left:1062.300px;top:742px;font-size:13.400px;letter-spacing:-.05px">26°C</div>
<div class="abs tk" style="left:1100.500px;top:742px;font-size:13.400px;letter-spacing:-.12px">Smoke</div>
<svg class="abs" style="left:1158px;top:743px" width="13" height="9" viewBox="0 0 13 9"><path d="M1.200 7.300L6.500 2l5.300 5.300" stroke="#fff" stroke-width="1.300" fill="none"/></svg>
<svg class="abs" style="left:1182px;top:739px" width="15" height="18" viewBox="0 0 15 18" fill="none" stroke="#fff" stroke-width="1.100"><rect x="2" y="5.500" width="7" height="7" rx="1.300"/><path d="M9 8l3.300-1.800v5.600L9 10"/><path d="M2.500 3.300c0-1.500 1-2.300 3-2.300s3 .8 3 2.300M2.500 14.700c0 1.500 1 2.300 3 2.300s3-.8 3-2.300"/></svg>
<svg class="abs" style="left:1204px;top:743px" width="18" height="11" viewBox="0 0 18 11"><path d="M4 10.500a3.500 3.500 0 0 1-.3-7 5 5 0 0 1 9-1 3.500 3.500 0 0 1 1.800 8z" fill="#e6e6e6"/><path d="M6 10.500l8.500-5a3.500 3.500 0 0 1 0 5z" fill="#fff"/></svg>
<svg class="abs" style="left:1229px;top:741px" width="17" height="15" viewBox="0 0 17 15" fill="none" stroke="#fff" stroke-width="1.100"><path d="M1 5.200h2.600L7 2v11L3.600 9.800H1z"/><path d="M9.300 5.300a3 3 0 0 1 0 4.400M11.300 3.500a5.500 5.500 0 0 1 0 8M13.300 1.700a8 8 0 0 1 0 11.600"/></svg>
<div class="abs tk" style="left:1251px;top:731.800px;width:60px;text-align:center;font-size:12px;letter-spacing:-.3px">10:32 PM</div>
<div class="abs tk" style="left:1251px;top:749.800px;width:60px;text-align:center;font-size:12px;letter-spacing:-.2px">8/5/2022</div>
<svg class="abs" style="left:1324px;top:739px" width="26" height="26" viewBox="0 0 26 26"><path d="M1 1.500h16v11.500H5.500L1 17z" fill="#fff"/><path d="M3.500 4.500h11M3.500 7.300h11M3.500 10h11" stroke="#1f1f1f" stroke-width="1"/><circle cx="16.700" cy="16.700" r="7.300" fill="#1f1f1f" stroke="#8a8a8a" stroke-width="1"/></svg>
<div class="abs tk" style="left:1337.500px;top:750px;font-size:10.500px;font-weight:bold">4</div>
<div class="abs" style="left:1360.500px;top:728px;width:1px;height:40px;background:#7a7a7a"></div>


</div></body></html>
